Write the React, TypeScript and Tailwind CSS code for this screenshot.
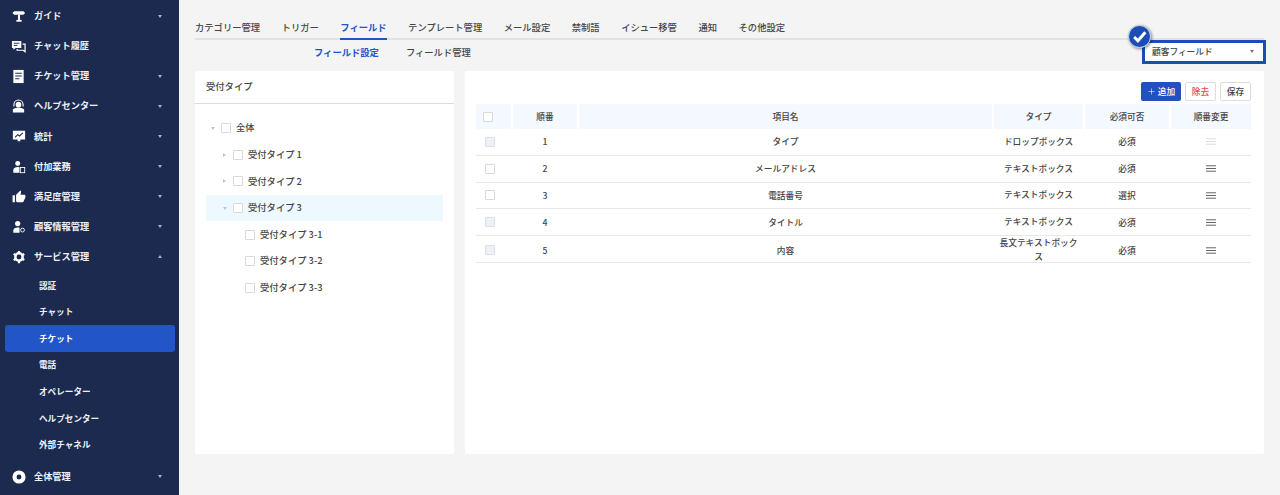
import React from 'react';
import { MdThumbUp } from 'react-icons/md';
import { Plus } from 'lucide-react';

const font = { fontFamily: '"Noto Sans CJK JP", "Noto Sans", sans-serif' };

function Sign() {
  return (
    <svg viewBox="0 0 16 16" className="w-[14px] h-[14px]" fill="white">
      <path d="M2.500 2.500h10.500l2 2-2 2H2.500l-2-2z" />
      <path d="M6.800 6.500h2.400v6H6.800z" />
      <path d="M5 12.500h6V14.500H5z" />
    </svg>
  );
}

function Chat() {
  return (
    <svg viewBox="0 0 16 16" className="w-[15px] h-[15px]">
      <path d="M1 2h10v7.500H5L2.500 11.500V9.500H1z" fill="white" />
      <path d="M3 4.500h6M3 6.800h4" stroke="#1b2a4e" strokeWidth="1" />
      <path d="M12.300 5.500H15v8l-2-1.500H6.500v-1.300" fill="none" stroke="white" strokeWidth="1.300" />
    </svg>
  );
}

function Doc() {
  return (
    <svg viewBox="0 0 16 16" className="w-[15px] h-[15px]">
      <path d="M2.500 1h11v14h-11z" fill="white" />
      <path d="M4.500 4.500h7M4.500 7.500h7M4.500 10.500h4.500" stroke="#1b2a4e" strokeWidth="1.100" />
    </svg>
  );
}

function Agent() {
  return (
    <svg viewBox="0 0 16 16" className="w-[15px] h-[15px]" fill="white">
      <circle cx="8" cy="6" r="3" />
      <path d="M2.500 8V6a5.500 5.500 0 0 1 11 0v2h-1.200V6a4.300 4.300 0 0 0-8.600 0v2z" />
      <path d="M2 11c1-1.300 3-1.800 6-1.800s5 .5 6 1.800v3.500H2z" />
    </svg>
  );
}

function Monitor() {
  return (
    <svg viewBox="0 0 16 16" className="w-[14px] h-[14px]">
      <path d="M1 2h14v10H9.500v2h-3v-2H1z" fill="white" />
      <path d="M3.500 9.500 6.500 6.500l2 1.500 4-3.500" stroke="#1b2a4e" strokeWidth="1.200" fill="none" />
    </svg>
  );
}

function PersonDoc() {
  return (
    <svg viewBox="0 0 16 16" className="w-[14px] h-[14px]" fill="white">
      <circle cx="6.500" cy="4" r="2.800" />
      <path d="M1.500 14.500v-3C1.500 9.500 3.500 8 6.500 8c.8 0 1.500.1 2 .3v6.200z" />
      <rect x="9.500" y="8.500" width="5" height="6" fill="none" stroke="white" strokeWidth="1" />
    </svg>
  );
}

function PersonInfo() {
  return (
    <svg viewBox="0 0 16 16" className="w-[14px] h-[14px]" fill="white">
      <circle cx="6.500" cy="4" r="3" />
      <path d="M1.500 14.500v-2.500c0-2.200 2.200-3.500 5-3.500.8 0 1.500.1 2.100.2v5.800z" />
      <circle cx="12" cy="11.500" r="2.200" fill="none" stroke="white" strokeWidth="1" />
    </svg>
  );
}

function Gear() {
  return (
    <svg viewBox="0 0 16 16" className="w-[14px] h-[14px]">
      <circle cx="8" cy="8" r="4.200" fill="none" stroke="white" strokeWidth="2.800" />
      <path d="M8 1v14M1.900 4.500l12.200 7M1.900 11.500l12.200-7" stroke="white" strokeWidth="2.400" strokeDasharray="2.500 9 2.500" />
    </svg>
  );
}

function CircleDot() {
  return (
    <svg viewBox="0 0 16 16" className="w-[14px] h-[14px]">
      <circle cx="8" cy="8" r="7.500" fill="white" />
      <circle cx="8" cy="8" r="2.800" fill="#1b2a4e" />
    </svg>
  );
}

function Caret({ up, color = 'border-t-[#aab2c5]' }: { up?: boolean; color?: string }) {
  if (up) return <span className="w-0 h-0 border-x-[2.500px] border-x-transparent border-b-[3px] border-b-[#aab2c5]" />;
  return <span className={`w-0 h-0 border-x-[2.500px] border-x-transparent border-t-[3px] ${color}`} />;
}

function Grip({ light }: { light?: boolean }) {
  return (
    <svg viewBox="0 0 10 7" className="w-[10px] h-[7px]" fill={light ? '#dcdcdc' : '#666666'}>
      <rect x="0" y="0.300" width="10" height="1" />
      <rect x="0" y="3" width="10" height="1" />
      <rect x="0" y="5.700" width="10" height="1" />
    </svg>
  );
}

const topMenu: { label: string; icon: React.ReactNode; caret?: boolean }[] = [
  { label: 'ガイド', icon: <Sign />, caret: true },
  { label: 'チャット履歴', icon: <Chat /> },
  { label: 'チケット管理', icon: <Doc />, caret: true },
  { label: 'ヘルプセンター', icon: <Agent />, caret: true },
  { label: '統計', icon: <Monitor />, caret: true },
  { label: '付加業務', icon: <PersonDoc />, caret: true },
  { label: '満足度管理', icon: <MdThumbUp className="w-[14px] h-[14px] text-white" />, caret: true },
  { label: '顧客情報管理', icon: <PersonInfo />, caret: true },
];

const subMenu = ['認証', 'チャット', 'チケット', '電話', 'オペレーター', 'ヘルプセンター', '外部チャネル'];
const tabs = ['カテゴリー管理', 'トリガー', 'フィールド', 'テンプレート管理', 'メール設定', '禁制語', 'イシュー移管', '通知', 'その他設定'];

const rows = [
  { no: 1, name: 'タイプ', type: 'ドロップボックス', req: '必須', locked: true },
  { no: 2, name: 'メールアドレス', type: 'テキストボックス', req: '必須', locked: false },
  { no: 3, name: '電話番号', type: 'テキストボックス', req: '選択', locked: false },
  { no: 4, name: 'タイトル', type: 'テキストボックス', req: '必須', locked: true },
  { no: 5, name: '内容', type: '長文テキストボックス', req: '必須', locked: true },
];

function MenuRow({ icon, label, right }: { icon: React.ReactNode; label: string; right?: React.ReactNode }) {
  return (
    <div className="h-[30.100px] flex items-center pl-[11px] pr-[17px] text-[#eef1f7] text-[9.200px] font-bold">
      <span className="w-[15px] flex justify-center">{icon}</span>
      <span className="ml-[8px] flex-1">{label}</span>
      {right}
    </div>
  );
}

function Check({ className = 'border-[#d9d9d9] bg-white' }: { className?: string }) {
  return <span className={`w-[10px] h-[10px] border rounded-[1px] shrink-0 ${className}`} />;
}

function TreeRow({ label, indent, caret, active }: { label: string; indent: string; caret?: 'down' | 'right'; active?: boolean }) {
  return (
    <div className={`h-[26.600px] flex items-center ${indent} ${active ? 'bg-[#eef8ff]' : ''}`}>
      <span className="w-[10px] flex justify-start">
        {caret === 'down' && <Caret color="border-t-[#c4c4c4]" />}
        {caret === 'right' && <span className="w-0 h-0 border-y-[2.500px] border-y-transparent border-l-[3px] border-l-[#c4c4c4]" />}
      </span>
      <Check />
      <span className="ml-[5px] text-[9.300px] font-medium text-[#444]">{label}</span>
    </div>
  );
}

const colWidths = 'grid-cols-[35px_64px_minmax(0,1fr)_89px_84px_80px] gap-x-[2px]';

export default function App() {
  return (
    <div className="w-[1280px] h-[495px] flex bg-[#f4f4f4] overflow-hidden" style={font}>
      <aside className="w-[179px] shrink-0 bg-[#1b2a4e] pt-[1px]">
        {topMenu.map(m => (
          <MenuRow key={m.label} icon={m.icon} label={m.label} right={m.caret ? <Caret /> : undefined} />
        ))}
        <MenuRow icon={<Gear />} label="サービス管理" right={<Caret up />} />
        <div>
          {subMenu.map(s => (
            <div
              key={s}
              className={`h-[26.600px] ml-[5px] mr-[4px] pl-[34px] flex items-center rounded-[3px] text-[8.600px] font-bold text-[#eef1f7] ${s === 'チケット' ? 'bg-[#2256c8] text-white' : ''}`}
            >
              {s}
            </div>
          ))}
        </div>
        <div className="mt-[3.500px]">
          <MenuRow icon={<CircleDot />} label="全体管理" right={<Caret />} />
        </div>
      </aside>

      <main className="flex-1 min-w-0 pl-[16px] pr-[16px] pt-[16px]">
        <div className="border-b-[2px] border-[#e2e2e2] h-[24px] flex gap-x-[21.500px]">
          {tabs.map(t => (
            <div
              key={t}
              className={`h-[24px] pt-[1px] text-[9.300px] leading-[20px] ${t === 'フィールド' ? 'font-bold text-[#2256c8] border-b-[2px] border-[#2256c8]' : 'font-medium text-[#444]'}`}
            >
              {t}
            </div>
          ))}
        </div>

        <div className="relative h-[31px] flex items-start pl-[119px] pt-[4px] gap-x-[27px] text-[9.300px] font-medium leading-[16px]">
          <span className="text-[#2256c8] font-bold">フィールド設定</span>
          <span className="text-[#444]">フィールド管理</span>
          <div className="absolute right-[-2px] top-[-0.500px] w-[124px] h-[24px] border-[3px] border-[#1c4db5] bg-white flex items-center justify-between pl-[7px] pr-[9px] text-[8.700px] font-medium text-[#444]">
            顧客フィールド
            <Caret color="border-t-[#777]" />
          </div>
          <div className="absolute right-[113px] top-[-15px] w-[23px] h-[23px] rounded-full bg-[#1c4db5] border border-white/70 shadow-[1px_1px_3px_rgba(0,0,0,0.45)] flex items-center justify-center">
            <svg viewBox="0 0 16 16" className="w-[17px] h-[17px]" fill="none" stroke="white" strokeWidth="2.800">
              <path d="M3 8.500 6.500 12 13.500 4" />
            </svg>
          </div>
        </div>

        <div className="flex gap-x-[11px] h-[383px]">
          <section className="w-[259px] bg-white rounded-[2px] shrink-0">
            <div className="h-[33px] border-b border-[#dddddd] pl-[11px] flex items-center text-[9.300px] font-medium text-[#444]">受付タイプ</div>
            <div className="pt-[11px] pl-[11px] pr-[11px]">
              <TreeRow label="全体" indent="pl-[5px]" caret="down" />
              <TreeRow label="受付タイプ 1" indent="pl-[17px]" caret="right" />
              <TreeRow label="受付タイプ 2" indent="pl-[17px]" caret="right" />
              <TreeRow label="受付タイプ 3" indent="pl-[17px]" caret="down" active />
              <TreeRow label="受付タイプ 3-1" indent="pl-[29px]" />
              <TreeRow label="受付タイプ 3-2" indent="pl-[29px]" />
              <TreeRow label="受付タイプ 3-3" indent="pl-[29px]" />
            </div>
          </section>

          <section className="flex-1 min-w-0 bg-white rounded-[2px] pl-[11px] pr-[13px] pt-[11px] text-[8.700px] font-medium text-[#444]">
            <div className="flex justify-end gap-x-[4px] h-[22px]">
              <button className="w-[40px] h-[18.500px] bg-[#1f51bf] text-white rounded-[2px] flex items-center justify-center gap-x-[2px]">
                <Plus className="w-[9px] h-[9px]" strokeWidth={1.500} />追加
              </button>
              <button className="w-[31px] h-[18.500px] bg-white border border-[#dddddd] rounded-[2px] text-[#e5484d]">除去</button>
              <button className="w-[31px] h-[18.500px] bg-white border border-[#dddddd] rounded-[2px]">保存</button>
            </div>
            <div className={`grid ${colWidths} h-[25px] items-stretch`}>
              <div className="bg-[#f4f8ff] flex items-center pl-[7px]"><Check /></div>
              {['順番', '項目名', 'タイプ', '必須可否', '順番変更'].map(h => (
                <div key={h} className="bg-[#f4f8ff] flex items-center justify-center">{h}</div>
              ))}
            </div>
            {rows.map(r => (
              <div key={r.no} className={`grid ${colWidths} h-[26.800px] items-center border-b border-[#e8e8e8] text-center`}>
                <div className="flex pl-[9px]"><Check className={r.locked ? 'border-[#dcdfe6] bg-[#eef1f8]' : 'border-[#d9d9d9] bg-white'} /></div>
                <div>{r.no}</div>
                <div>{r.name}</div>
                <div className="px-[4px] leading-[14px]">{r.type}</div>
                <div>{r.req}</div>
                <div className="flex justify-center">
                  <Grip light={r.no === 1} />
                </div>
              </div>
            ))}
          </section>
        </div>
      </main>
    </div>
  );
}
